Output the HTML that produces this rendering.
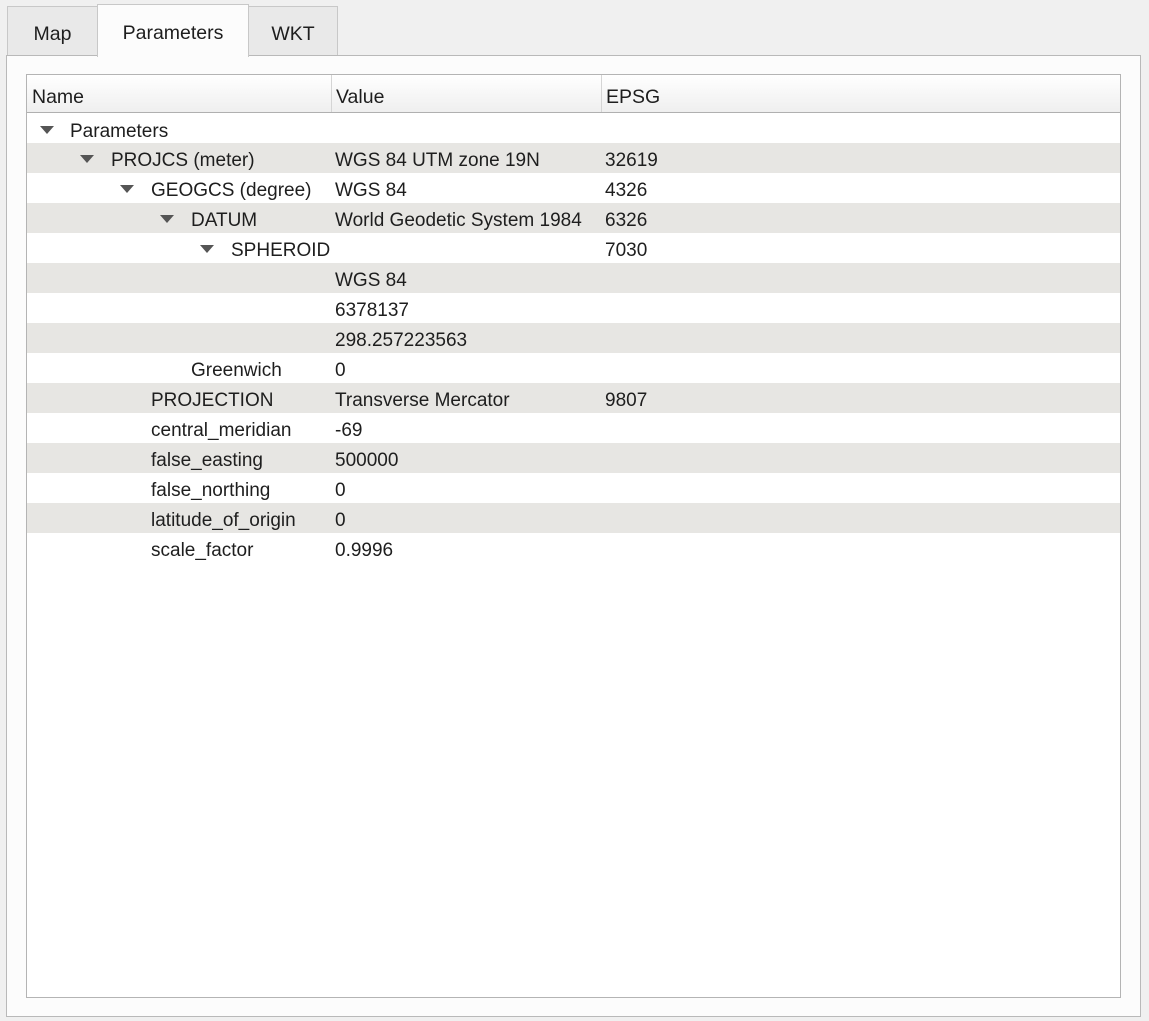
<!DOCTYPE html>
<html><head><style>
body{margin:0;width:1149px;height:1021px;background:#f0f0f0;position:relative;overflow:hidden;font-family:"Liberation Sans",sans-serif;color:#1e1e1e}
.tab{position:absolute;border:1px solid #c8c8c8;border-bottom:none;background:#e9e9e9;font-size:19.5px;text-align:center;box-sizing:border-box}
.panel{position:absolute;left:6px;top:55px;width:1135px;height:962px;border:1px solid #b9b9b9;background:#fcfcfc;box-sizing:border-box}
.tree{position:absolute;left:26px;top:74px;width:1095px;height:924px;border:1px solid #b4b4b4;background:#fff;box-sizing:border-box;overflow:hidden}
.hdr{position:absolute;left:0;top:0;width:100%;height:38px;background:linear-gradient(#fff,#efefef);border-bottom:1px solid #b0b0b0;box-sizing:border-box}
.hdr span{position:absolute;top:11px;font-size:19.5px}
.sep{position:absolute;top:0;width:1px;height:37px;background:#d5d5d5}
.row{position:absolute;left:0;width:100%;height:30px;font-size:19px}
.row.g{background:#e7e6e3}
.row span{position:absolute;top:7px;white-space:nowrap}
.tri{position:absolute;top:12px;width:0;height:0;border-left:7px solid transparent;border-right:7px solid transparent;border-top:8px solid #555}
</style></head><body>
<div class="panel"></div>
<div class="tab" style="left:7px;top:6px;width:91px;height:49px;padding-top:16px">Map</div>
<div class="tab" style="left:248px;top:6px;width:90px;height:49px;padding-top:16px">WKT</div>
<div class="tab" style="left:97px;top:4px;width:152px;height:53px;background:#fcfcfc;padding-top:17px;z-index:2">Parameters</div>
<div class="tree">
<div class="hdr"><span style="left:5px">Name</span><div class="sep" style="left:304px"></div><span style="left:309px">Value</span><div class="sep" style="left:574px"></div><span style="left:579px">EPSG</span></div>
<div class="row" style="top:39px"><div class="tri" style="left:13px"></div><span style="left:43px">Parameters</span></div>
<div class="row g" style="top:68px"><div class="tri" style="left:53px"></div><span style="left:84px">PROJCS (meter)</span><span style="left:308px">WGS 84 UTM zone 19N</span><span style="left:578px">32619</span></div>
<div class="row" style="top:98px"><div class="tri" style="left:93px"></div><span style="left:124px">GEOGCS (degree)</span><span style="left:308px">WGS 84</span><span style="left:578px">4326</span></div>
<div class="row g" style="top:128px"><div class="tri" style="left:133px"></div><span style="left:164px">DATUM</span><span style="left:308px">World Geodetic System 1984</span><span style="left:578px">6326</span></div>
<div class="row" style="top:158px"><div class="tri" style="left:173px"></div><span style="left:204px">SPHEROID</span><span style="left:578px">7030</span></div>
<div class="row g" style="top:188px"><span style="left:308px">WGS 84</span></div>
<div class="row" style="top:218px"><span style="left:308px">6378137</span></div>
<div class="row g" style="top:248px"><span style="left:308px">298.257223563</span></div>
<div class="row" style="top:278px"><span style="left:164px">Greenwich</span><span style="left:308px">0</span></div>
<div class="row g" style="top:308px"><span style="left:124px">PROJECTION</span><span style="left:308px">Transverse Mercator</span><span style="left:578px">9807</span></div>
<div class="row" style="top:338px"><span style="left:124px">central_meridian</span><span style="left:308px">-69</span></div>
<div class="row g" style="top:368px"><span style="left:124px">false_easting</span><span style="left:308px">500000</span></div>
<div class="row" style="top:398px"><span style="left:124px">false_northing</span><span style="left:308px">0</span></div>
<div class="row g" style="top:428px"><span style="left:124px">latitude_of_origin</span><span style="left:308px">0</span></div>
<div class="row" style="top:458px"><span style="left:124px">scale_factor</span><span style="left:308px">0.9996</span></div>
</div>
</body></html>
